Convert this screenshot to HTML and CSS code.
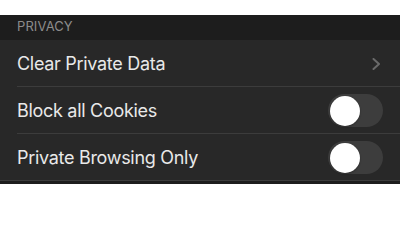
FILE: index.html
```html
<!DOCTYPE html>
<html>
<head>
<meta charset="utf-8">
<link rel="stylesheet" href="styles.css">
</head>
<body>
<div class="page">
  <section class="group">
    <div class="group-header">PRIVACY</div>
    <div class="row">
      <span class="label">Clear Private Data</span>
      <svg class="chevron" width="9" height="12" viewBox="0 0 9 12"><path d="M1.5 1 L7 6 L1.5 11" fill="none" stroke="#6a6a6a" stroke-width="2" stroke-linecap="round" stroke-linejoin="round"/></svg>
    </div>
    <div class="row">
      <span class="label">Block all Cookies</span>
      <span class="switch"><span class="knob"></span></span>
    </div>
    <div class="row last">
      <span class="label">Private Browsing Only</span>
      <span class="switch"><span class="knob"></span></span>
    </div>
    <div class="group-footer"></div>
  </section>
</div>
</body>
</html>
```

FILE: styles.css
```css
html, body {
  margin: 0;
  padding: 0;
  background: #ffffff;
}
body {
  font-family: "Inter", "Liberation Sans", "DejaVu Sans", sans-serif;
  -webkit-font-smoothing: antialiased;
}
.page {
  width: 400px;
  padding-top: 15px;
}
.group {
  display: flex;
  flex-direction: column;
  background: #1d1d1d;
}
.group-header {
  height: 25px;
  box-sizing: border-box;
  padding: 3px 0 0 17px;
  font-size: 13px;
  line-height: 16px;
  color: #8c8c8c;
  letter-spacing: 0.1px;
}
.row {
  position: relative;
  height: 47px;
  box-sizing: border-box;
  display: flex;
  align-items: center;
  justify-content: space-between;
  padding: 0 17px;
  background: #282828;
}
.row::after {
  content: "";
  position: absolute;
  left: 17px;
  right: 0;
  bottom: 0;
  height: 1px;
  background: #3c3c3c;
}
.row.last::after {
  left: 0;
}
.label {
  font-size: 18px;
  color: #e9e9e9;
  letter-spacing: -0.3px;
}
.chevron {
  margin-right: 2px;
}
.switch {
  width: 55px;
  height: 33px;
  border-radius: 17px;
  background: #3d3d3d;
  display: flex;
  align-items: center;
  padding-left: 2px;
  box-sizing: border-box;
}
.knob {
  width: 30px;
  height: 30px;
  border-radius: 50%;
  background: #ffffff;
  box-shadow: 0 1px 2px rgba(0,0,0,0.3);
}
.group-footer {
  height: 3px;
  background: #1d1d1d;
}
```
